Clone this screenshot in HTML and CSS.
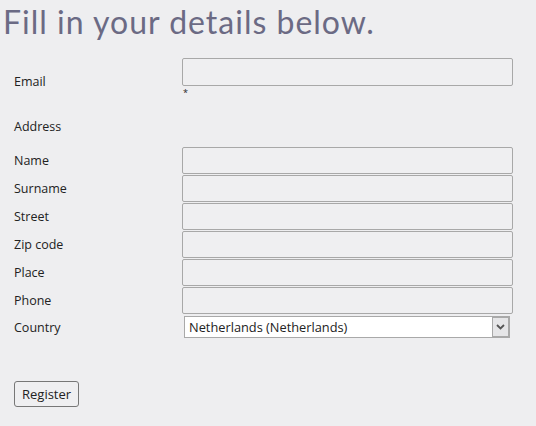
FILE: index.html
```html
<!DOCTYPE html>
<html>
<head>
<meta charset="utf-8">
<link rel="stylesheet" href="styles.css">
</head>
<body>
<h1 class="title">Fill in your details below.</h1>
<form class="form">
  <div class="row row-email">
    <label class="label label-email">Email</label>
    <div class="field">
      <input class="input" type="text">
      <span class="req">*</span>
    </div>
  </div>
  <div class="section">Address</div>
  <div class="rows">
    <div class="row"><label class="label">Name</label><input class="input" type="text"></div>
    <div class="row"><label class="label">Surname</label><input class="input" type="text"></div>
    <div class="row"><label class="label">Street</label><input class="input" type="text"></div>
    <div class="row"><label class="label">Zip code</label><input class="input" type="text"></div>
    <div class="row"><label class="label">Place</label><input class="input" type="text"></div>
    <div class="row"><label class="label">Phone</label><input class="input" type="text"></div>
    <div class="row row-country">
      <label class="label">Country</label>
      <div class="select-wrap">
        <select class="select"><option>Netherlands (Netherlands)</option></select>
        <span class="arrow"><svg width="9" height="6" viewBox="0 0 9 6"><path d="M1 1 L4.5 4.5 L8 1" fill="none" stroke="#555" stroke-width="1.8"/></svg></span>
      </div>
    </div>
  </div>
  <button class="btn" type="button">Register</button>
</form>
</body>
</html>
```

FILE: styles.css
```css
html, body {
  margin: 0;
  padding: 0;
  background: #eeeef0;
}
body {
  font-family: "Open Sans", "Noto Sans", sans-serif;
  font-size: 12.5px;
  color: #222;
}
.title {
  margin: 0;
  padding: 2px 0 0 3px;
  height: 56px;
  box-sizing: border-box;
  font-family: Lato, "Open Sans", sans-serif;
  font-weight: 400;
  font-size: 32px;
  letter-spacing: 1px;
  line-height: 40px;
  color: #6b6a84;
}
.form {
  padding-left: 14px;
}
.row {
  display: grid;
  grid-template-columns: 168px 331px;
  align-items: center;
  height: 28px;
}
.row-email {
  height: auto;
  align-items: start;
  padding-top: 2px;
}
.label {
  line-height: 16px;
  padding-top: 1px;
}
.label-email {
  padding-top: 16px;
}
.field {
  display: flex;
  flex-direction: column;
}
.input {
  box-sizing: border-box;
  width: 331px;
  height: 28px;
  margin: 0;
  border: 1px solid #a8a8a8;
  border-radius: 2px;
  background: #efeff1;
  font: inherit;
}
.rows .input {
  height: 27px;
}
.req {
  font-size: 9px;
  line-height: 14px;
  padding-left: 1px;
}
.section {
  padding-top: 19px;
  line-height: 16px;
  height: 46px;
  box-sizing: border-box;
}
.row-country {
  height: 26px;
}
.select-wrap {
  position: relative;
  width: 326px;
  margin-left: 2px;
}
.select {
  -webkit-appearance: none;
  appearance: none;
  box-sizing: border-box;
  width: 326px;
  height: 22px;
  margin: 0;
  padding: 0 0 0 4px;
  border: 1px solid #a9a9a9;
  border-radius: 0;
  background: #fff;
  font: inherit;
  font-size: 12.8px;
  color: #222;
}
.arrow {
  position: absolute;
  right: 1px;
  top: 1px;
  width: 17px;
  height: 20px;
  box-sizing: border-box;
  border: 1px solid #a9a9a9;
  background: #e6e6e8;
  display: flex;
  align-items: center;
  justify-content: center;
}
.btn {
  display: block;
  margin-top: 41px;
  box-sizing: border-box;
  height: 26px;
  padding: 0 7px;
  border: 1px solid #777;
  border-radius: 3px;
  background: #efeff1;
  font: inherit;
  font-size: 13px;
  color: #222;
}
```
